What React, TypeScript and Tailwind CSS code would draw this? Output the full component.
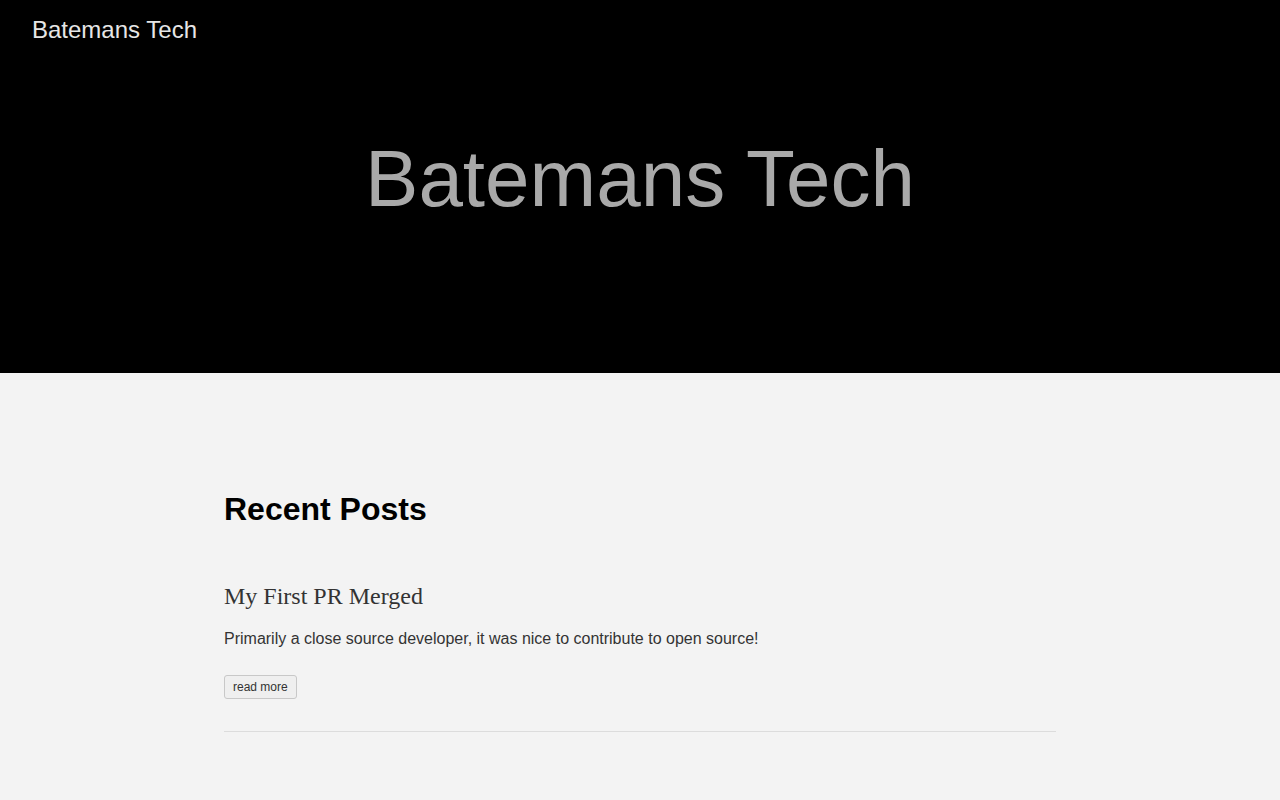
export default function App() {
  return (
    <div className="min-h-screen bg-[#f3f3f3] font-['Liberation_Sans',Arial,sans-serif]">
      <header className="bg-black h-[373px] flex flex-col">
        <nav className="px-8 pt-[14px]">
          <a className="text-[24px] leading-[32px] text-[#e6e6e6]">Batemans Tech</a>
        </nav>
        <div className="flex justify-center pt-[85px]">
          <h1 className="text-[80px] leading-[96px] text-[#a9a9a9]">Batemans Tech</h1>
        </div>
      </header>
      <main className="w-[832px] mx-auto pt-[118px]">
        <h2 className="text-[32px] leading-[36px] font-bold text-black">Recent Posts</h2>
        <article className="mt-[53px] pb-[32px] border-b border-[#dcdcdc]">
          <h3 className="font-['Liberation_Serif','Times_New_Roman',serif] text-[24px] leading-[32px] text-[#333]">
            My First PR Merged
          </h3>
          <p className="mt-[15px] text-[16px] leading-[24px] text-[#333]">
            Primarily a close source developer, it was nice to contribute to open source!
          </p>
          <button className="mt-[24px] h-[24px] px-2 text-[12px] leading-[20px] text-[#333] bg-[#efefef] border border-[#c8c8c8] rounded-[3px]">
            read more
          </button>
        </article>
      </main>
    </div>
  );
}
